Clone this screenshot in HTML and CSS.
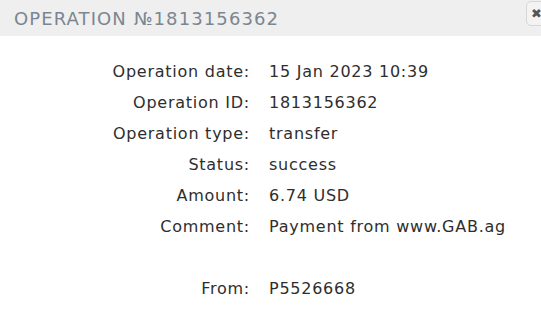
FILE: index.html
```html
<!DOCTYPE html>
<html>
<head>
<meta charset="utf-8">
<link rel="stylesheet" href="styles.css">
</head>
<body>
<div class="header">
  <h1 class="title">OPERATION №1813156362</h1>
  <button class="close">✖</button>
</div>
<div class="details">
  <div class="label">Operation date:</div><div class="value">15 Jan 2023 10:39</div>
  <div class="label">Operation ID:</div><div class="value">1813156362</div>
  <div class="label">Operation type:</div><div class="value">transfer</div>
  <div class="label">Status:</div><div class="value">success</div>
  <div class="label">Amount:</div><div class="value">6.74 USD</div>
  <div class="label">Comment:</div><div class="value">Payment from www.GAB.ag</div>
  <div class="label spacer"></div><div class="value spacer"></div>
  <div class="label">From:</div><div class="value">P5526668</div>
</div>
</body>
</html>
```
FILE: styles.css
```css
html, body {
  margin: 0;
  padding: 0;
  background: #ffffff;
  overflow: hidden;
}
.header {
  position: relative;
  height: 36px;
  background: #efefef;
  display: flex;
  align-items: center;
  padding-left: 14px;
}
.title {
  margin: 0;
  font-family: "DejaVu Sans", sans-serif;
  font-weight: normal;
  font-size: 18px;
  letter-spacing: 1.1px;
  color: #7b8690;
}
.close {
  position: absolute;
  left: 526px;
  top: 1px;
  width: 30px;
  height: 25px;
  border: 1px solid #d6d6d6;
  border-radius: 5px;
  background: #f3f3f3;
  color: #555;
  font-size: 13px;
  padding: 0 0 0 4px;
  text-align: left;
  font-family: "DejaVu Sans", sans-serif;
}
.details {
  display: grid;
  grid-template-columns: 250px auto;
  column-gap: 19px;
  grid-auto-rows: 31px;
  padding-top: 20px;
  font-family: "DejaVu Sans", sans-serif;
  font-size: 16px;
  letter-spacing: 0.75px;
  color: #2e2e2e;
}
.label {
  text-align: right;
  line-height: 31px;
}
.value {
  line-height: 31px;
}
```
